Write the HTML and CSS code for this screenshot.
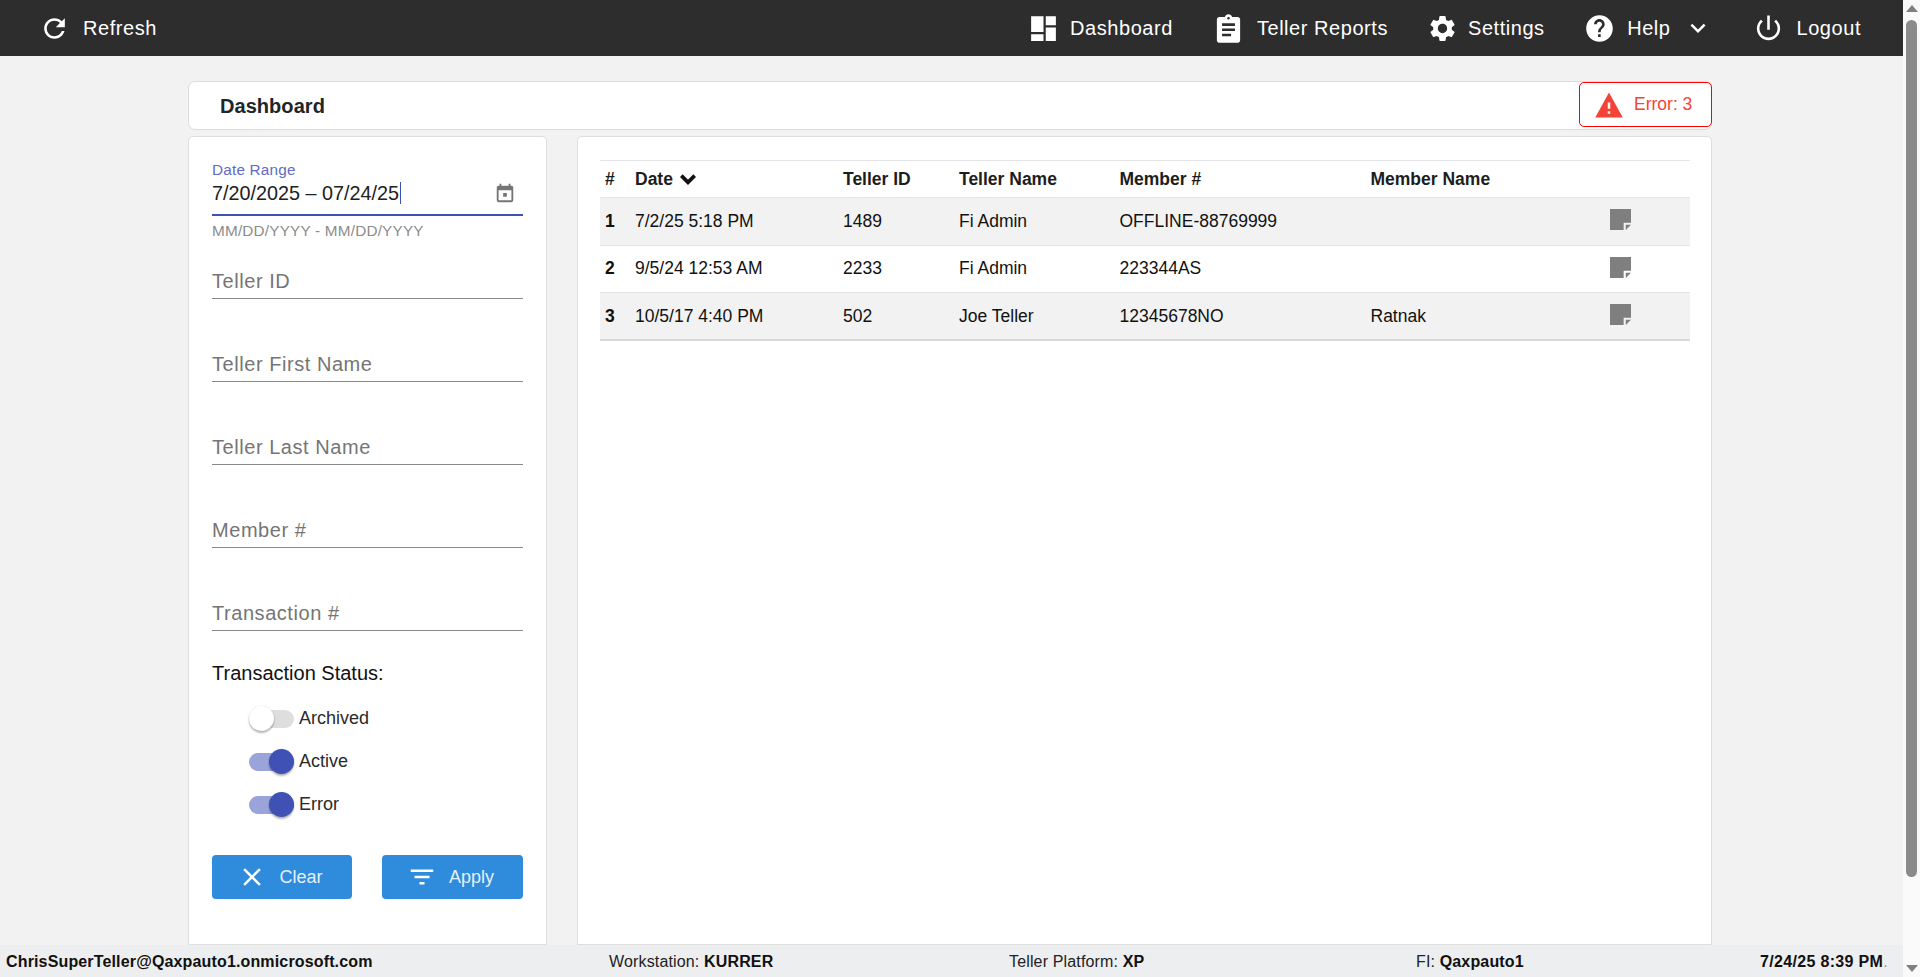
FILE: index.html
```html
<!DOCTYPE html>
<html lang="en">
<head>
<meta charset="utf-8">
<title>Dashboard</title>
<link rel="stylesheet" href="styles.css">
</head>
<body>
<div class="app">
  <div class="page">
    <nav class="nav">
      <a class="nav-item"><svg class="nav-icon" viewBox="0 0 24 24"><path d="M17.65 6.35C16.2 4.9 14.21 4 12 4c-4.42 0-7.99 3.58-7.99 8s3.57 8 7.99 8c3.73 0 6.84-2.55 7.73-6h-2.08c-.82 2.33-3.04 4-5.65 4-3.31 0-6-2.69-6-6s2.69-6 6-6c1.66 0 3.14.69 4.22 1.78L13 11h7V4l-2.35 2.35z"/></svg>Refresh</a>
      <div class="nav-right">
        <a class="nav-item"><svg class="nav-icon icon-dash" viewBox="0 0 24 24"><path d="M1 1h11v14H1zM14 1h9v8h-9zM1 17h11v6H1zM14 11h9v12h-9z"/></svg>Dashboard</a>
        <a class="nav-item"><svg class="nav-icon" viewBox="0 0 24 24"><path d="M19 3h-4.18C14.4 1.84 13.3 1 12 1c-1.3 0-2.4.84-2.82 2H5c-1.1 0-2 .9-2 2v16c0 1.1.9 2 2 2h14c1.1 0 2-.9 2-2V5c0-1.1-.9-2-2-2zm-7 0c.55 0 1 .45 1 1s-.45 1-1 1-1-.45-1-1 .45-1 1-1zm2 15H7v-2h7v2zm3-4H7v-2h10v2zm0-4H7V8h10v2z"/></svg>Teller Reports</a>
        <a class="nav-item item-settings"><svg class="nav-icon" viewBox="0 0 24 24"><path d="M19.14 12.94c.04-.3.06-.61.06-.94 0-.32-.02-.64-.07-.94l2.03-1.58c.18-.14.23-.41.12-.61l-1.92-3.32c-.12-.22-.37-.29-.59-.22l-2.39.96c-.5-.38-1.03-.7-1.62-.94l-.36-2.54c-.04-.24-.24-.41-.48-.41h-3.84c-.24 0-.43.17-.47.41l-.36 2.54c-.59.24-1.13.57-1.62.94l-2.39-.96c-.22-.08-.47 0-.59.22L2.74 8.87c-.12.21-.08.47.12.61l2.03 1.58c-.05.3-.09.63-.09.94s.02.64.07.94l-2.03 1.58c-.18.14-.23.41-.12.61l1.92 3.32c.12.22.37.29.59.22l2.39-.96c.5.38 1.03.7 1.62.94l.36 2.54c.05.24.24.41.48.41h3.84c.24 0 .44-.17.47-.41l.36-2.54c.59-.24 1.13-.56 1.62-.94l2.39.96c.22.08.47 0 .59-.22l1.92-3.32c.12-.22.07-.47-.12-.61l-2.01-1.58zM12 15.6c-1.98 0-3.6-1.62-3.6-3.6s1.62-3.6 3.6-3.6 3.6 1.62 3.6 3.6-1.62 3.6-3.6 3.6z"/></svg>Settings</a>
        <a class="nav-item item-help"><svg class="nav-icon icon-help" viewBox="0 0 24 24"><path d="M12 1C5.93 1 1 5.93 1 12s4.93 11 11 11 11-4.93 11-11S18.07 1 12 1zm1 18h-2.2v-2.2H13V19zm2.3-7.9l-1 1c-.8.8-1.3 1.4-1.3 3h-2.2v-.5c0-1.2.5-2.300 1.300-3.100l1.360-1.400c.4-.4.640-.95.640-1.550 0-1.200-1-2.200-2.200-2.200s-2.200 1-2.200 2.200H7.500c0-2.430 1.970-4.400 4.400-4.400s4.400 1.970 4.400 4.400c0 .97-.4 1.850-1 2.550z"/></svg>Help<svg class="nav-caret" viewBox="0 0 24 24"><path d="M7.41 8.59L12 13.17l4.59-4.58L18 10l-6 6-6-6 1.41-1.41z"/></svg></a>
        <a class="nav-item"><svg class="nav-icon" viewBox="0 0 24 24"><path d="M13 2h-2v11h2V2zm4.830 3.170l-1.420 1.420C17.990 7.860 19 9.810 19 12c0 3.870-3.130 7-7 7s-7-3.130-7-7c0-2.190 1.010-4.140 2.580-5.420L6.170 5.170C4.230 6.820 3 9.260 3 12c0 4.970 4.030 9 9 9s9-4.030 9-9c0-2.740-1.230-5.180-3.170-6.830z"/></svg>Logout</a>
      </div>
    </nav>

    <main class="content">
      <header class="title-card">
        <h1 class="title">Dashboard</h1>
        <div class="error-badge"><svg class="error-icon" viewBox="0 0 24 24"><path d="M1 22h22L12 2 1 22zm12-3h-2v-2h2v2zm0-4h-2v-5h2v5z"/></svg>Error: 3</div>
      </header>

      <div class="columns">
        <aside class="card filters">
          <div class="date-field">
            <div class="date-label">Date Range</div>
            <div class="date-value"><span class="date-text">7/20/2025 – 07/24/25</span><svg class="cal-icon" viewBox="0 0 24 24"><path d="M19 4h-1V2h-2v2H8V2H6v2H5c-1.100 0-2 .9-2 2v14c0 1.100.9 2 2 2h14c1.100 0 2-.9 2-2V6c0-1.100-.9-2-2-2zm0 16H5V9h14v11zM10 12h4v4h-4z"/></svg></div>
            <div class="date-hint">MM/DD/YYYY - MM/DD/YYYY</div>
          </div>
          <div class="field">Teller ID</div>
          <div class="field">Teller First Name</div>
          <div class="field">Teller Last Name</div>
          <div class="field">Member #</div>
          <div class="field">Transaction #</div>

          <div class="status-title">Transaction Status:</div>
          <div class="toggles">
            <div class="toggle-row"><span class="switch"><span class="knob"></span></span>Archived</div>
            <div class="toggle-row"><span class="switch on"><span class="knob"></span></span>Active</div>
            <div class="toggle-row"><span class="switch on"><span class="knob"></span></span>Error</div>
          </div>

          <div class="actions">
            <button class="btn btn-clear"><svg class="btn-icon" viewBox="0 0 24 24"><path d="M19 6.410L17.590 5 12 10.590 6.410 5 5 6.410 10.590 12 5 17.590 6.410 19 12 13.410 17.590 19 19 17.590 13.410 12z"/></svg>Clear</button>
            <button class="btn"><svg class="btn-icon" viewBox="0 0 24 24"><path d="M10 18h4v-2h-4v2zM3 6v2h18V6H3zm3 7h12v-2H6v2z"/></svg>Apply</button>
          </div>
        </aside>

        <section class="card results">
          <table class="grid">
            <colgroup>
              <col class="c-num"><col class="c-date"><col class="c-id"><col class="c-name"><col class="c-member"><col class="c-mname"><col>
            </colgroup>
            <thead>
              <tr><th>#</th><th>Date <svg class="sort-icon" viewBox="0 0 24 24"><path d="M4 8l8 8 8-8" /></svg></th><th>Teller ID</th><th>Teller Name</th><th>Member #</th><th>Member Name</th><th></th></tr>
            </thead>
            <tbody>
              <tr><th>1</th><td>7/2/25 5:18 PM</td><td>1489</td><td>Fi Admin</td><td>OFFLINE-88769999</td><td></td><td><svg class="note-icon" viewBox="0 0 20 20"><path d="M0 0h20v13h-7v7H0z"/><path d="M15 15h5l-5 5z"/></svg></td></tr>
              <tr><th>2</th><td>9/5/24 12:53 AM</td><td>2233</td><td>Fi Admin</td><td>223344AS</td><td></td><td><svg class="note-icon" viewBox="0 0 20 20"><path d="M0 0h20v13h-7v7H0z"/><path d="M15 15h5l-5 5z"/></svg></td></tr>
              <tr><th>3</th><td>10/5/17 4:40 PM</td><td>502</td><td>Joe Teller</td><td>12345678NO</td><td>Ratnak</td><td><svg class="note-icon" viewBox="0 0 20 20"><path d="M0 0h20v13h-7v7H0z"/><path d="M15 15h5l-5 5z"/></svg></td></tr>
            </tbody>
          </table>
        </section>
      </div>
    </main>

    <footer class="footer">
      <div><b>ChrisSuperTeller@Qaxpauto1.onmicrosoft.com</b></div>
      <div>Workstation: <b>KURRER</b></div>
      <div>Teller Platform: <b>XP</b></div>
      <div>FI: <b>Qaxpauto1</b></div>
      <div class="foot-time"><b>7/24/25 8:39 PM</b>.</div>
    </footer>
  </div>

  <div class="scrollbar">
    <span class="arrow-up"></span>
    <span class="thumb"></span>
    <span class="arrow-down"></span>
  </div>
</div>
</body>
</html>
```

FILE: styles.css
```css
* { box-sizing: border-box; }
html, body { margin: 0; height: 100%; overflow: hidden; }
body { font-family: "Liberation Sans", Arial, sans-serif; color: #212529; background: #f2f2f2; }

.app { display: flex; height: 977px; }
.page { flex: 1; min-width: 0; display: flex; flex-direction: column; }

.nav { flex: none; height: 56px; background: #2d2d2d; color: #fff; display: flex; align-items: center; justify-content: space-between; padding: 0 42px 0 39px; }
.nav-right { display: flex; align-items: center; gap: 40px; }
.nav-item { display: flex; align-items: center; gap: 13px; font-size: 20px; letter-spacing: .55px; white-space: nowrap; }
.item-settings { gap: 10px; margin-left: -1px; }
.item-help { margin-left: .5px; }
.nav-icon { width: 31px; height: 31px; fill: #fff; flex: none; }
.icon-dash { width: 27px; height: 27px; }
.icon-help { width: 29px; height: 29px; }
.nav-caret { width: 30px; height: 30px; fill: #fff; margin-left: -1px; }

.content { flex: 1; min-height: 0; overflow: hidden; padding: 25px 191px 0 188px; display: flex; flex-direction: column; }
.title-card { flex: none; height: 49px; background: #fff; border: 1px solid #dcdcdc; border-radius: 7px; display: flex; align-items: center; justify-content: space-between; padding-left: 31px; }
.title { margin: 2px 0 0; font-size: 20px; font-weight: 700; letter-spacing: .05px; color: #212529; }
.error-badge { width: 133px; height: 45px; margin-right: -1px; margin-top: -2px; border: 1px solid #f00; border-radius: 5px; display: flex; align-items: center; padding-left: 14px; gap: 10px; color: #f44336; font-size: 17.5px; }
.error-icon { width: 30px; height: 30px; fill: #f44336; flex: none; }

.columns { flex: 1; min-height: 0; display: flex; gap: 30px; margin-top: 6px; }
.card { background: #fff; border: 1px solid #dedede; border-radius: 5px 5px 0 0; }
.filters { flex: none; width: 359px; padding: 24px 23px 0; }
.results { flex: 1; min-width: 0; padding: 23px 21px 0 22px; }

.date-field { height: 72px; }
.date-label { font-size: 15.3px; line-height: 17px; color: #5f6bc4; letter-spacing: .2px; }
.date-value { height: 38px; display: flex; align-items: center; justify-content: space-between; border-bottom: 2px solid #3f51b5; font-size: 19.8px; color: #212121; padding: 0 7px 7px 0; }
.date-text { border-right: 1px solid #3f51b5; line-height: 22px; padding-right: 1px; }
.cal-icon { width: 22px; height: 22px; fill: #757575; }
.date-hint { margin-top: 7px; font-size: 15.3px; line-height: 16px; color: #8c8c8c; letter-spacing: .2px; }

.field { height: 39px; margin-top: 44px; border-bottom: 1px solid #8a8a8a; font-size: 20px; color: #757575; line-height: 26px; padding-top: 8px; letter-spacing: .55px; }
.date-field + .field { margin-top: 27px; }

.status-title { margin-top: 31px; font-size: 20px; line-height: 22px; color: #111; }
.toggles { margin-top: 22px; margin-left: 37px; display: flex; flex-direction: column; gap: 18px; }
.toggle-row { display: flex; align-items: center; height: 25px; font-size: 18px; color: #2a2a2a; gap: 5px; }
.switch { position: relative; width: 45px; height: 18px; border-radius: 9px; background: #dedede; }
.switch .knob { position: absolute; left: 0; top: -3.5px; width: 25px; height: 25px; border-radius: 50%; background: #fff; box-shadow: 0 2px 2px rgba(0,0,0,.28), 0 0 2px rgba(0,0,0,.12); }
.switch.on { background: #9aa3da; }
.switch.on .knob { left: 20px; background: #3f51b5; }

.actions { margin-top: 38px; display: flex; justify-content: space-between; }
.btn { width: 141px; height: 44px; border: 0; border-radius: 4px; background: #2f8bdb; color: #e4f0fb; font: 18px "Liberation Sans", Arial, sans-serif; display: flex; align-items: center; justify-content: center; gap: 12px; padding: 0 4px 0 0; }
.btn-clear { width: 140px; }
.btn-icon { width: 30px; height: 30px; fill: #fff; flex: none; }

.grid { width: 100%; table-layout: fixed; border-collapse: collapse; border-top: 1px solid #e3e3e8; border-bottom: 2px solid #d9d9d9; font-size: 17.5px; color: #111; }
.c-num { width: 30px; } .c-date { width: 208px; } .c-id { width: 116px; } .c-name { width: 160.5px; } .c-member { width: 251px; } .c-mname { width: 240px; }
.grid th, .grid td { padding: 0 5px; text-align: left; height: 47.5px; border-top: 1px solid #e3e3e8; }
.grid thead th { height: 37px; border-top: 0; font-size: 17.5px; color: #1d1d1d; }
.grid tbody tr:nth-child(odd) { background: #f2f2f2; }
.sort-icon { width: 20px; height: 20px; fill: none; stroke: #111; stroke-width: 4.5; vertical-align: -4px; }
.note-icon { width: 21px; height: 21px; fill: #7f7f7f; display: block; margin: -3px 0 0 -1px; }

.footer { flex: none; height: 32px; background: #edeef0; display: grid; grid-template-columns: 603px 400px 407px 344px 1fr; align-items: center; padding: 1px 0 0 6px; font-size: 16px; letter-spacing: .15px; color: #222; }
.footer b { color: #111; }
.foot-time { color: #999; letter-spacing: .33px; }

.scrollbar { flex: none; width: 17px; background: #fafafa; display: flex; flex-direction: column; align-items: center; padding: 5px 0; }
.thumb { flex: none; width: 11px; height: 857px; margin: 8px 0 auto; background: #8b8b8b; border-radius: 6px; }
.arrow-up { width: 0; height: 0; border: 6px solid transparent; border-top: 0; border-bottom: 7px solid #7f7f7f; }
.arrow-down { width: 0; height: 0; border: 6px solid transparent; border-bottom: 0; border-top: 7px solid #7f7f7f; }
```
